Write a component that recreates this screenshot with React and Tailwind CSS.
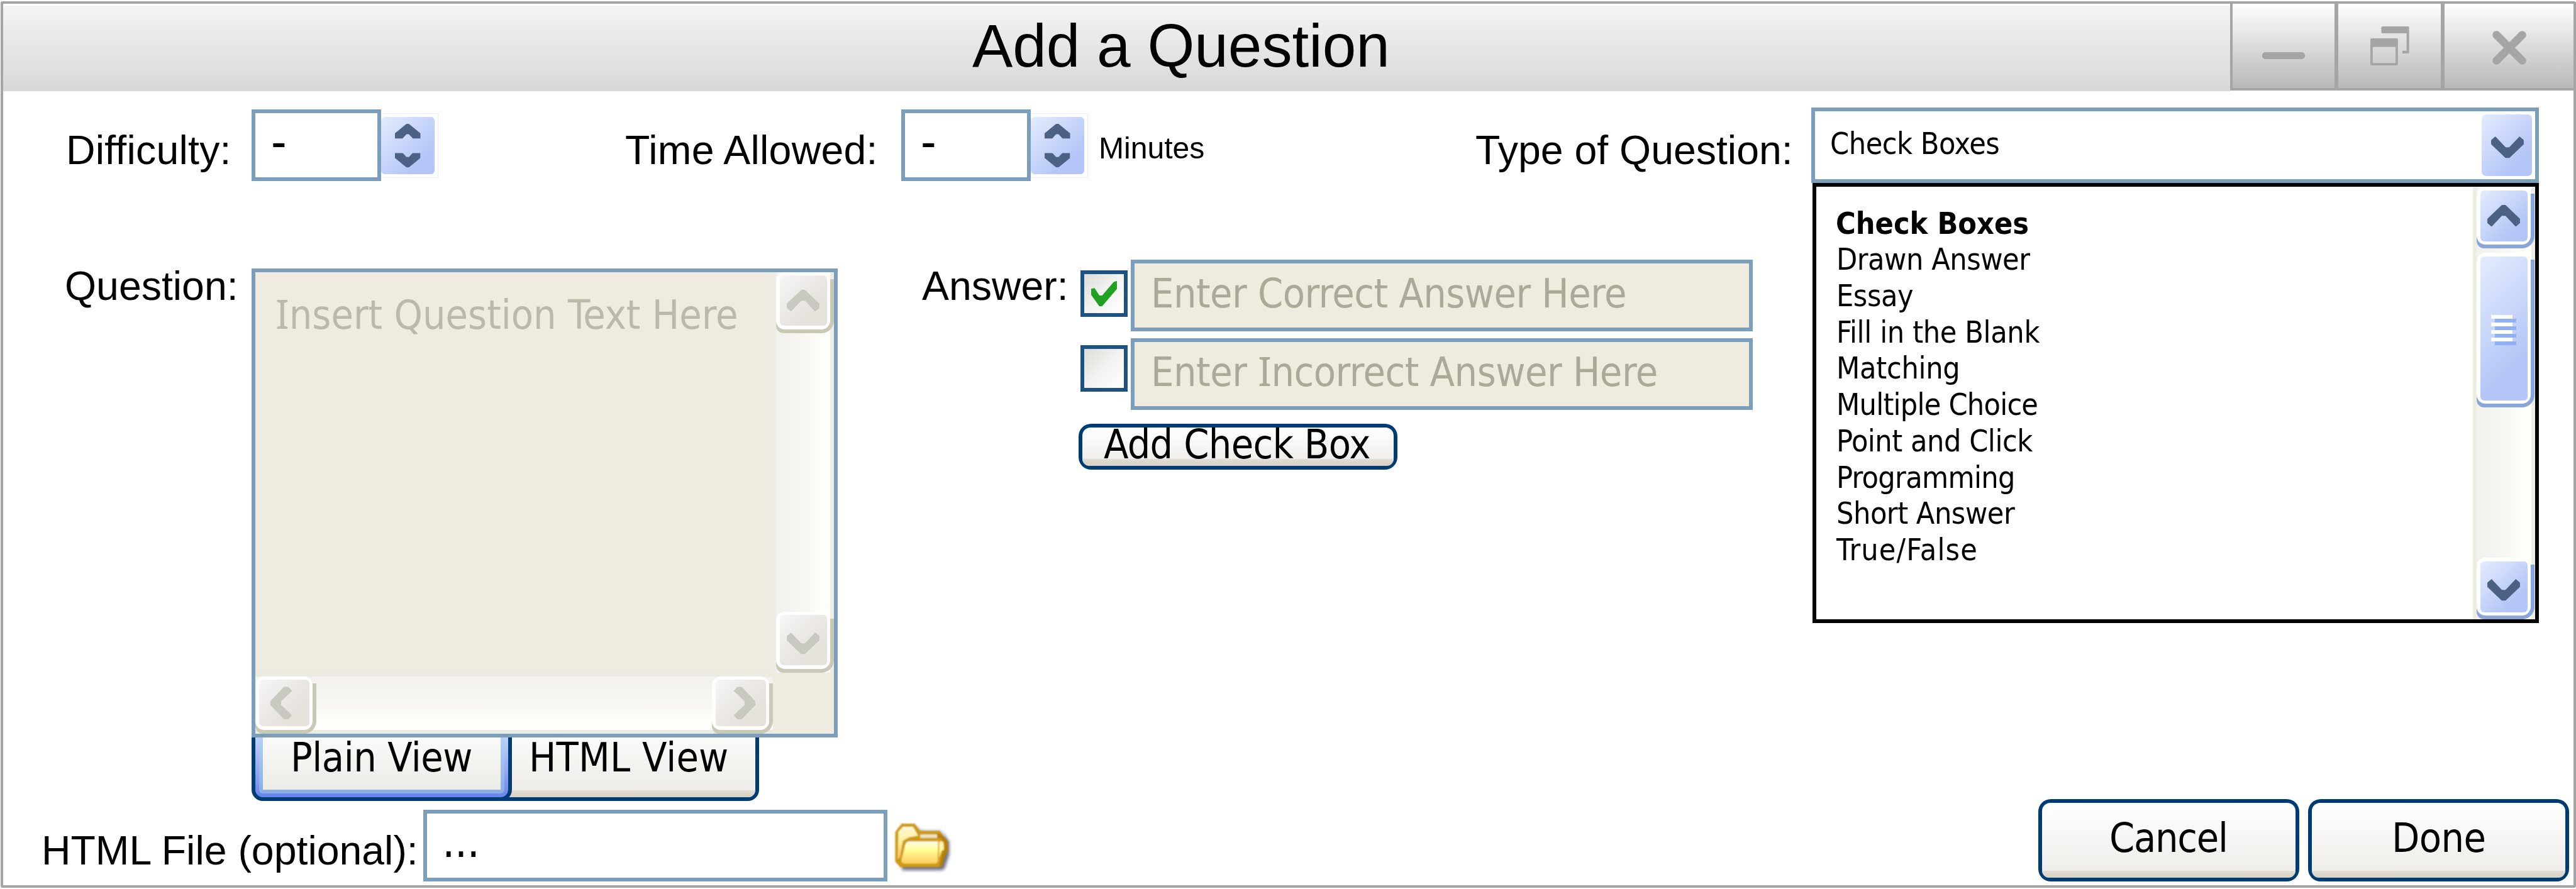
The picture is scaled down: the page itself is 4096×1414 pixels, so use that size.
import React from "react";

const ARIAL = "font-['Liberation_Sans',Arial,sans-serif]";
const LABEL = "font-['Liberation_Sans',Arial,sans-serif] text-[64.4px] whitespace-nowrap shrink-0";
const FIELD_TEXT = "text-[64.15px] whitespace-nowrap";
const BLUE = "bg-[linear-gradient(135deg,#e3ecff_0%,#cbd8fa_40%,#b4c6f7_75%)]";
const GRAY = "bg-[linear-gradient(135deg,#f7f7f7_0%,#ebe8e5_45%,#e5e2dc_80%)]";
const BUTTON_FACE = "bg-[linear-gradient(180deg,#ffffff_0%,#ecebe7_100%)]";
const TRACK_X = "bg-[linear-gradient(90deg,#f2f1ed_0%,#f8f7f3_55%,#fefffa_85%)]";
const TRACK_Y = "bg-[linear-gradient(180deg,#f2f1ed_0%,#f8f7f3_55%,#fefffa_85%)]";

const ROTATION = { up: "", right: "rotate-90", down: "rotate-180", left: "-rotate-90" };

function Chevron({ dir, className }) {
  return (
    <svg viewBox="0 0 54 36" className={`w-[52px] h-[34.6px] shrink-0 ${ROTATION[dir]} ${className}`} fill="currentColor">
      <path d="M24 0H30L54 23V30L47 36L30 18H24L7 36L0 30V23Z" />
    </svg>
  );
}

function SmallChevron({ dir }) {
  return (
    <svg viewBox="0 0 42 24" className={`w-[40.5px] h-[23.4px] shrink-0 text-[#4d6185] ${ROTATION[dir]}`} fill="currentColor">
      <path d="M19 0H23L42 15.5V24H29.5L23 17H19L12.5 24H0V15.5Z" />
    </svg>
  );
}

/* Raised scroll bar part: white rim, coloured face, shadow below and to the right. */
function Raised({ tone, size, className = "", children }) {
  const blue = tone === "blue";
  return (
    <div className={`relative shrink-0 ${size} ${className}`}>
      <div className={`absolute inset-x-0 bottom-0 top-[11px] rounded-bl-[12px] rounded-br-[20px] ${blue ? "bg-[#8aa6d9]" : "bg-[#c9c9b6]"}`} />
      <div className="relative h-[calc(100%-6px)] w-[calc(100%-6px)] rounded-[14px] bg-white p-[5.5px]">
        <div className={`flex h-full w-full items-center justify-center rounded-[6px] ${blue ? BLUE : GRAY}`}>{children}</div>
      </div>
    </div>
  );
}

function Spinner() {
  return (
    <div className="mt-[9px] h-[103px] w-[91px] shrink-0 border-y border-r border-[#e8eefb] py-[5px]">
      <div className={`flex h-[91px] w-[85px] flex-col items-center justify-center gap-[22px] rounded-[6px] ${BLUE}`}>
        <SmallChevron dir="up" />
        <SmallChevron dir="down" />
      </div>
    </div>
  );
}

function NumberBox() {
  return (
    <div className="mt-[3px] h-[114px] w-[206px] shrink-0 border-[6px] border-[#7b9ebd] bg-white pl-[25px] text-[76px] leading-[91px]">-</div>
  );
}

function CheckBox({ checked, className }) {
  return (
    <div className={`flex h-[74px] w-[75px] shrink-0 items-center justify-center border-[6px] border-[#1d5281] bg-[linear-gradient(135deg,#dcdcd8_0%,#f3f3f1_50%,#ffffff_100%)] ${className}`}>
      {checked && (
        <svg viewBox="0 0 41.5 40" className="h-[40px] w-[41.5px]" fill="#21a121">
          <path d="M0 12.2L5.5 11.3L13 23H17.5L36 1.3L41.4 0V12L17.5 40H12.9L0 22Z" />
        </svg>
      )}
    </div>
  );
}

function AnswerField({ children }) {
  return (
    <div className={`ml-[5px] h-[114px] w-[989px] shrink-0 border-[6px] border-[#7b9ebd] bg-[#efebde] pl-[26px] leading-[95px] text-[#aca998] ${FIELD_TEXT}`}>
      {children}
    </div>
  );
}

function PushButton({ className, textClass, children }) {
  return (
    <div className={`shrink-0 rounded-[20px] bg-[#003c74] p-[6px] ${className}`}>
      <div className={`flex h-full flex-col justify-between rounded-[13px] ${BUTTON_FACE}`}>
        <div className={`relative z-10 h-0 ${FIELD_TEXT} ${textClass}`}>{children}</div>
        <div className="h-[11px] shrink-0 rounded-b-[13px] bg-[linear-gradient(180deg,#e2ddd5,#d6d0c5)]" />
      </div>
    </div>
  );
}

/* Capital I with serifs, as in the placeholder texts. */
const SerifI = () => <span className="font-['Noto_Sans',sans-serif] leading-none">I</span>;

function Folder() {
  return (
    <svg viewBox="27 30 280 262" className="ml-[12px] mt-[37px] h-[84px] w-[90px] shrink-0 overflow-visible">
      <defs>
        <linearGradient id="front" x1="0" y1="0" x2="0" y2="1">
          <stop offset="0" stopColor="#fffdf0" />
          <stop offset="0.4" stopColor="#ffff94" />
          <stop offset="0.65" stopColor="#ffe680" />
          <stop offset="1" stopColor="#ffd060" />
        </linearGradient>
        <linearGradient id="back" x1="0" y1="0" x2="0" y2="1">
          <stop offset="0" stopColor="#fff8d8" />
          <stop offset="0.4" stopColor="#fff3a0" />
          <stop offset="1" stopColor="#ffc060" />
        </linearGradient>
        <filter id="soft" x="-10%" y="-10%" width="120%" height="120%">
          <feGaussianBlur stdDeviation="3.2" />
        </filter>
        <filter id="shade" x="-20%" y="-20%" width="140%" height="140%">
          <feGaussianBlur stdDeviation="8" />
        </filter>
      </defs>
      <path filter="url(#shade)" fill="#4a5070" opacity="0.8" d="M60 200H250L268 90L296 125V190L272 262L255 268H62Z" />
      <path filter="url(#shade)" fill="#7a86b0" opacity="0.5" d="M125 45L160 70H250L280 95L250 110H150Z" />
      <g filter="url(#soft)">
        <path fill="#cc9a14" d="M28 78L42 58L60 36H125L152 72H250L262 92L288 122L290 172L272 205L262 244L250 252H52L28 225Z" />
        <path fill="url(#back)" d="M44 76L66 52H116L142 96L96 104L66 122L52 200L40 216Z" />
        <path fill="#efe4c4" d="M152 90H236V107H152Z" />
        <path fill="#b57f08" d="M236 84L262 92L288 124L290 172L274 200L262 246L240 252L248 240L262 180L258 110L236 106Z" />
        <path fill="url(#front)" d="M96 124H238L258 128L262 160L240 226L230 234H72Q54 230 60 212L78 140Q82 126 96 124Z" />
        <path fill="#fff2a0" d="M252 122L268 128L270 165L260 172Z" />
        <path fill="none" stroke="#dca828" strokeWidth="7" d="M244 120L242 226" />
      </g>
    </svg>
  );
}

const TYPES = [
  ["Drawn Answer", "tracking-[-0.5px]"],
  ["Essay", "tracking-[-0.5px]"],
  ["Fill in the Blank", "tracking-[-0.4px]"],
  ["Matching", "tracking-[-0.3px]"],
  ["Multiple Choice", "tracking-[-0.8px]"],
  ["Point and Click", "tracking-[-0.5px]"],
  ["Programming", "tracking-[-0.7px]"],
  ["Short Answer", "tracking-[-0.5px]"],
  ["True/False", "tracking-[1.1px]"],
];

function TypeMenu() {
  return (
    <div className="absolute left-[2px] top-[120px] flex h-[700px] w-[1155px] border-[6px] border-black bg-white">
      <ul className="flex-1 pl-[32px] pt-[29.5px] text-[48.1px] leading-[57.73px]">
        <li className="-ml-px font-bold">Check Boxes</li>
        {TYPES.map(([label, tracking]) => (
          <li key={label} className={tracking}>{label}</li>
        ))}
      </ul>
      <div className={`flex w-[99px] flex-col border-x-[6px] border-[#edede5] ${TRACK_X}`}>
        <Raised tone="blue" size="h-[98px] w-[92px]">
          <Chevron dir="up" className="text-[#4d6185]" />
        </Raised>
        <Raised tone="blue" size="h-[246px] w-[92px]" className="mt-[7px]">
          <svg viewBox="0 0 40 48" className="mt-[6px] h-[48px] w-[40px]">
            {[0, 12, 24, 36].map((y) => (
              <g key={y}>
                <rect x="0" y={y} width="34" height="6" fill="#ffffff" />
                <rect x="6" y={y + 6} width="34" height="6" fill="#8eb0fa" />
              </g>
            ))}
          </svg>
        </Raised>
        <Raised tone="blue" size="h-[98px] w-[92px]" className="mt-auto">
          <Chevron dir="down" className="mt-[10px] text-[#4d6185]" />
        </Raised>
      </div>
    </div>
  );
}

function TitleBar() {
  const cell = "flex h-[138px] items-center justify-center border-b-[4px] border-[#a5a5a5] bg-[linear-gradient(180deg,#ffffff_0%,#b8b8b8_100%)]";
  return (
    <header className="flex h-[139px] bg-[#d8d8d8]">
      <h1 className={`flex-1 border-t-[3px] border-white bg-[linear-gradient(180deg,#f4f4f4_0%,#d8d8d8_100%)] pl-[1541px] text-[96.3px] leading-[127px] ${ARIAL}`}>
        Add a Question
      </h1>
      <div className="flex h-[139px] bg-white">
        <div className={`w-[169px] border-l-[4px] border-r-[3px] ${cell}`}>
          <div className="mt-[31px] h-[11px] w-[68px] rounded-[5px] bg-[#a5a5a5]" />
        </div>
        <div className={`w-[169px] border-x-[3px] ${cell}`}>
          <svg viewBox="0 0 65 65" className="h-[62px] w-[62px]" fill="#a5a5a5">
            <path d="M20 0H62.500Q64.600 0 64.600 2V45H54Q52 43 54 40.500H60.500V11.500H20Q18.300 11.500 18.300 9V2Q18.300 0 20 0Z" />
            <path fillRule="evenodd" d="M2 20H44Q46 20 46 22V63Q46 65 44 65H2Q0 65 0 63V22Q0 20 2 20ZM4 34.300V61H42V34.300Z" />
          </svg>
        </div>
        <div className={`w-[208px] border-l-[3px] ${cell}`}>
          <svg viewBox="0 0 54 54" className="mt-[5px] h-[54px] w-[54px]" stroke="#a5a5a5" strokeWidth="12.500" strokeLinecap="round">
            <path d="M6.500 6.500L47.500 47.500M47.500 6.500L6.500 47.500" />
          </svg>
        </div>
      </div>
    </header>
  );
}

export default function App() {
  return (
    <div className="h-[1414px] w-[4096px] overflow-hidden bg-white pl-px pt-[2px] font-['DejaVu_Sans_Condensed','DejaVu_Sans',Tahoma,sans-serif] text-black">
      <div className="h-[1410px] w-[4095px] overflow-hidden rounded-[3px] border-[4px] border-[#a5a5a5] bg-white">
        <TitleBar />

        {/* Settings row */}
        <div className="mt-[26px] flex h-[120px] items-start">
          <div className={`w-[395px] pl-[100px] leading-[137px] tracking-[0.25px] ${LABEL}`}>Difficulty:</div>
          <NumberBox />
          <Spinner />
          <div className={`w-[736px] pl-[297px] leading-[137px] tracking-[0.25px] ${LABEL}`}>Time Allowed:</div>
          <NumberBox />
          <Spinner />
          <div className={`w-[616px] pl-[17px] text-[48.1px] leading-[128px] ${ARIAL}`}>Minutes</div>
          <div className={`w-[534px] leading-[137px] ${LABEL}`}>Type of Question:</div>
          <div className="relative z-10">
            <div className="flex h-[120px] w-[1157px] border-[6px] border-[#7b9ebd] bg-white">
              <div className="flex-1 pl-[24px] text-[48.1px] leading-[103px] tracking-[-0.5px]">Check Boxes</div>
              <div className={`mr-[5px] mt-[5px] flex h-[98px] w-[80px] items-center justify-center rounded-[7px] ${BLUE}`}>
                <Chevron dir="down" className="ml-[2px] mt-[6px] text-[#4d6185]" />
              </div>
            </div>
            <TypeMenu />
          </div>
        </div>

        {/* Question and answers */}
        <div className="mt-[122px] flex h-[858px] items-start">
          <div className={`w-[395px] pl-[98px] leading-[85px] ${LABEL}`}>Question:</div>
          <div className="mt-[13.5px] w-[932px] shrink-0">
            <div className="flex h-[746px] flex-col border-[6px] border-[#7b9ebd] bg-[#efebde]">
              <div className="flex h-[637px]">
                <div className={`flex-1 pl-[32px] leading-[135px] text-[#bdb9aa] ${FIELD_TEXT}`}>
                  <SerifI />nsert Question Text Here
                </div>
                <div className={`flex w-[98px] flex-col border-x-[6px] border-[#edece5] ${TRACK_X}`}>
                  <Raised tone="gray" size="h-[97px] w-[92px]">
                    <Chevron dir="up" className="text-[#c9c9c2]" />
                  </Raised>
                  <Raised tone="gray" size="h-[97px] w-[92px]" className="mt-auto">
                    <Chevron dir="down" className="mt-[10px] text-[#c9c9c2]" />
                  </Raised>
                </div>
              </div>
              <div className={`flex h-[97px] w-[823px] border-y-[6px] border-[#ebeae3] ${TRACK_Y}`}>
                <Raised tone="gray" size="h-[91px] w-[97px]">
                  <Chevron dir="left" className="mr-[10px] text-[#c9c9c2]" />
                </Raised>
                <Raised tone="gray" size="h-[91px] w-[97px]" className="ml-auto">
                  <Chevron dir="right" className="ml-[13px] text-[#c9c9c2]" />
                </Raised>
              </div>
            </div>

            <div className="flex">
              <div className="relative h-[101px] w-[414px] shrink-0 rounded-b-[18px] bg-[#003c74] px-[6px] pb-[6px]">
                <div className="h-full rounded-b-[12px] bg-[linear-gradient(180deg,#bdd3fb_0%,#97aef3_50%,#6982ee_100%)] px-[6px] pb-[6px]">
                  <div className="h-full rounded-b-[6px] bg-[linear-gradient(180deg,#b5d0f5,#89ade4)] px-[6px] pb-[6px]">
                    <div className={`h-full bg-[linear-gradient(180deg,#fafaf8,#ecebe7)] pl-[44px] leading-[64px] tracking-[-0.5px] ${FIELD_TEXT}`}>Plain View</div>
                  </div>
                </div>
              </div>
              <div className="-ml-[16px] h-[101px] w-[409px] shrink-0 rounded-br-[18px] bg-[#003c74] pb-[6px] pr-[6px]">
                <div className="flex h-full flex-col justify-between rounded-br-[12px] bg-[linear-gradient(180deg,#fafaf8,#ecebe7)]">
                  <div className={`relative z-10 h-0 pl-[43px] leading-[64px] tracking-[0.2px] ${FIELD_TEXT}`}>HTML View</div>
                  <div className="h-[11px] rounded-br-[12px] bg-[linear-gradient(180deg,#e2ddd5,#d6d0c5)]" />
                </div>
              </div>
            </div>
          </div>

          <div className={`w-[386px] pl-[134px] leading-[85px] ${LABEL}`}>Answer:</div>
          <div>
            <div className="flex items-start">
              <CheckBox checked className="mt-[17px]" />
              <AnswerField><span className="tracking-[-0.54px]">Enter Correct Answer Here</span></AnswerField>
            </div>
            <div className="mt-[11px] flex items-start">
              <CheckBox className="mt-[11px]" />
              <AnswerField>
                <span className="tracking-[-0.5px]">Enter <SerifI />ncorrect Answer Here</span>
              </AnswerField>
            </div>
            <PushButton className="-ml-[3px] mt-[22px] h-[73px] w-[507px]" textClass="pl-[34px] leading-[54px] tracking-[-0.7px]">Add Check Box</PushButton>
          </div>
        </div>

        {/* File picker and dialog buttons */}
        <div className="flex h-[131px] items-start">
          <div className={`w-[668px] pl-[61px] leading-[164px] ${LABEL}`}>HTML File (optional):</div>
          <div className="mt-[17px] h-[114px] w-[738px] shrink-0 border-[6px] border-[#7b9ebd] bg-white pl-[24px] text-[72px] leading-[89px] tracking-[-0.8px]">...</div>
          <Folder />
          <div className="ml-auto mr-[7px] flex gap-[14px]">
            <PushButton className="h-[131px] w-[415px]" textClass="pl-[107px] leading-[112px] tracking-[-1.3px]">Cancel</PushButton>
            <PushButton className="h-[131px] w-[415px]" textClass="pl-[127px] leading-[112px] tracking-[-0.6px]">Done</PushButton>
          </div>
        </div>
      </div>
    </div>
  );
}
